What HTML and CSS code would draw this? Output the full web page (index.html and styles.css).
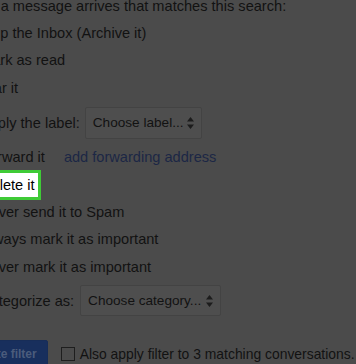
FILE: index.html
```html
<!doctype html>
<html>
<head>
<meta charset="UTF-8">
<title>Filter actions</title>
<link rel="stylesheet" href="styles.css">
</head>

<body>
  <div class="filter">
    <div class="row intro">When a message arrives that matches this search:</div>
    <div class="row opt">Skip the Inbox (Archive it)</div>
    <div class="row opt">Mark as read</div>
    <div class="row opt">Star it</div>
    <div class="row opt tall">
      Apply the label:
      <div class="pick pick-label">
        <span>Choose label...</span>
        <svg width="9" height="14" viewBox="0 0 9 14"><path d="M4.5 1 8 5.5H1z M4.5 13 8 8.5H1z" fill="#1c1c1c"/></svg>
      </div>
    </div>
    <div class="row opt">
      Forward it
      <a href="#" class="fwd">add forwarding address</a>
    </div>
    <div class="row">
      <span class="mark">Delete it</span>
    </div>
    <div class="row opt">Never send it to Spam</div>
    <div class="row opt">Always mark it as important</div>
    <div class="row opt">Never mark it as important</div>
    <div class="row opt cat">
      Categorize as:
      <div class="pick pick-cat">
        <span>Choose category...</span>
        <svg width="9" height="14" viewBox="0 0 9 14"><path d="M4.5 1 8 5.5H1z M4.5 13 8 8.5H1z" fill="#1c1c1c"/></svg>
      </div>
    </div>
    <div class="bottom">
      <button class="create">Create filter</button>
      <span class="box"></span>
      <span class="also">Also apply filter to 3 matching conversations.</span>
    </div>
  </div>
</body>
</html>
```

FILE: styles.css
```css
html, body {
  margin: 0;
  height: 100%;
}
body {
  background-color: #4b4b4b;
  overflow: hidden;
  font-family: "Liberation Sans", Arial, sans-serif;
  font-size: 14.6px;
  color: #121212;
}
.filter {
  margin-top: -8px;
  display: flex;
  flex-direction: column;
}
.row {
  height: 27.4px;
  display: flex;
  align-items: center;
  white-space: nowrap;
  flex-shrink: 0;
}
.intro {
  margin-left: -41.5px;
}
.opt {
  margin-left: -20px;
}
.tall {
  height: 42px;
}
.cat {
  height: 40.2px;
}
/* fake selects */
.pick {
  box-sizing: border-box;
  display: flex;
  align-items: center;
  justify-content: space-between;
  border: 1px solid #434343;
  border-radius: 2px;
  background-color: #4e4e4e;
  font-size: 13.6px;
  padding: 0 6px 0 7px;
}
.pick-label {
  width: 117px;
  height: 32px;
  margin-left: 5px;
}
.pick-cat {
  width: 141px;
  height: 31px;
  margin-left: 6px;
}
.fwd {
  color: #1c2745;
  text-decoration: none;
  margin-left: 19px;
}
/* highlighted option */
.mark {
  margin-left: -25px;
  height: 24px;
  line-height: 24px;
  padding: 0 3px;
  border: 3px solid #3fcb36;
  background-color: #fff;
  color: #000;
}
.bottom {
  margin-top: 19.2px;
  display: flex;
  align-items: center;
  white-space: nowrap;
}
.create {
  flex-shrink: 0;
  margin-left: -40px;
  height: 29px;
  padding: 0 10px 0 9px;
  border: 1px solid #172d58;
  border-radius: 2px;
  background-color: #182f5d;
  color: #4b5c7c;
  font-family: "Liberation Sans", Arial, sans-serif;
  font-size: 12px;
  font-weight: bold;
}
.box {
  flex-shrink: 0;
  width: 12px;
  height: 12px;
  border: 1px solid #1e1e1e;
  margin: 0 5px 0 13px;
}
.also {
  font-size: 13.9px;
}
```
